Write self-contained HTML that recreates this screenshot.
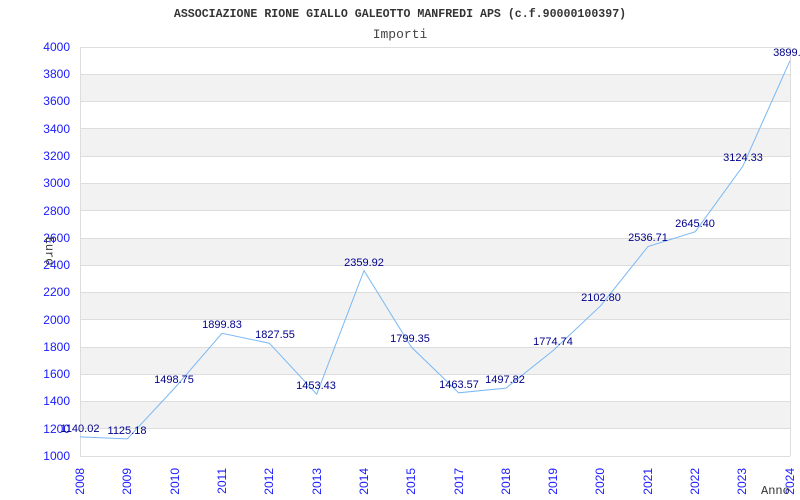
<!DOCTYPE html>
<html><head><meta charset="utf-8"><style>
html,body{margin:0;padding:0;background:#fff;width:800px;height:500px;overflow:hidden}
</style></head><body>
<svg width="800" height="500" xmlns="http://www.w3.org/2000/svg">
<text x="400" y="17" text-anchor="middle" font-family="Liberation Mono,monospace" font-weight="bold" font-size="11.6" fill="#333">ASSOCIAZIONE RIONE GIALLO GALEOTTO MANFREDI APS (c.f.90000100397)</text>
<text x="400" y="38" text-anchor="middle" font-family="Liberation Mono,monospace" font-size="13" fill="#444">Importi</text>
<g fill="#f2f2f2">
<rect x="80" y="74.3" width="710" height="27.3"/>
<rect x="80" y="128.8" width="710" height="27.3"/>
<rect x="80" y="183.3" width="710" height="27.3"/>
<rect x="80" y="237.9" width="710" height="27.3"/>
<rect x="80" y="292.4" width="710" height="27.3"/>
<rect x="80" y="347" width="710" height="27.3"/>
<rect x="80" y="401.5" width="710" height="27.3"/>
</g>
<g stroke="#ddd" stroke-width="1">
<line x1="80" y1="47.5" x2="790" y2="47.5"/><line x1="80" y1="74.5" x2="790" y2="74.5"/><line x1="80" y1="101.5" x2="790" y2="101.5"/><line x1="80" y1="128.5" x2="790" y2="128.5"/><line x1="80" y1="156.5" x2="790" y2="156.5"/><line x1="80" y1="183.5" x2="790" y2="183.5"/><line x1="80" y1="210.5" x2="790" y2="210.5"/><line x1="80" y1="238.5" x2="790" y2="238.5"/><line x1="80" y1="265.5" x2="790" y2="265.5"/><line x1="80" y1="292.5" x2="790" y2="292.5"/><line x1="80" y1="319.5" x2="790" y2="319.5"/><line x1="80" y1="347.5" x2="790" y2="347.5"/><line x1="80" y1="374.5" x2="790" y2="374.5"/><line x1="80" y1="401.5" x2="790" y2="401.5"/><line x1="80" y1="428.5" x2="790" y2="428.5"/><line x1="80" y1="456.5" x2="790" y2="456.5"/>
<line x1="80.5" y1="47" x2="80.5" y2="456"/><line x1="790.5" y1="47" x2="790.5" y2="456"/>
</g>
<g font-family="Liberation Sans,sans-serif" font-size="12" fill="#1a1aff" text-anchor="end">
<text x="70" y="51">4000</text><text x="70" y="78">3800</text><text x="70" y="105">3600</text><text x="70" y="133">3400</text><text x="70" y="160">3200</text><text x="70" y="187">3000</text><text x="70" y="215">2800</text><text x="70" y="242">2600</text><text x="70" y="269">2400</text><text x="70" y="296">2200</text><text x="70" y="324">2000</text><text x="70" y="351">1800</text><text x="70" y="378">1600</text><text x="70" y="405">1400</text><text x="70" y="433">1200</text><text x="70" y="460">1000</text>
</g>
<g font-family="Liberation Sans,sans-serif" font-size="12" fill="#1a1aff" text-anchor="end">
<text transform="translate(84,468) rotate(-90)">2008</text>
<text transform="translate(131,468) rotate(-90)">2009</text>
<text transform="translate(179,468) rotate(-90)">2010</text>
<text transform="translate(226,468) rotate(-90)">2011</text>
<text transform="translate(273,468) rotate(-90)">2012</text>
<text transform="translate(321,468) rotate(-90)">2013</text>
<text transform="translate(368,468) rotate(-90)">2014</text>
<text transform="translate(415,468) rotate(-90)">2015</text>
<text transform="translate(463,468) rotate(-90)">2017</text>
<text transform="translate(510,468) rotate(-90)">2018</text>
<text transform="translate(557,468) rotate(-90)">2019</text>
<text transform="translate(604,468) rotate(-90)">2020</text>
<text transform="translate(652,468) rotate(-90)">2021</text>
<text transform="translate(699,468) rotate(-90)">2022</text>
<text transform="translate(746,468) rotate(-90)">2023</text>
<text transform="translate(794,468) rotate(-90)">2024</text>
</g>
<text transform="translate(46,251) rotate(90)" text-anchor="middle" font-family="Liberation Mono,monospace" font-size="12" fill="#333">Euro</text>
<text x="761" y="494" font-family="Liberation Mono,monospace" font-size="12" fill="#333">Anno</text>
<polyline fill="none" stroke="#7ab8f5" stroke-width="1" points="80,436.9 127.3,438.9 174.7,388 222,333.3 269.3,343.2 316.7,394.2 364,270.6 411.3,347 458.7,392.8 506,388.1 553.3,350.4 600.7,305.7 648,246.5 695.3,231.7 742.7,166.4 790,60.7"/>
<g font-family="Liberation Sans,sans-serif" font-size="11" fill="#00008b" text-anchor="middle">
<text x="80" y="432">1140.02</text><text x="127" y="434">1125.18</text><text x="174" y="383">1498.75</text><text x="222" y="328">1899.83</text><text x="275" y="338">1827.55</text><text x="316" y="389">1453.43</text><text x="364" y="266">2359.92</text><text x="410" y="342">1799.35</text><text x="459" y="388">1463.57</text><text x="505" y="383">1497.82</text><text x="553" y="345">1774.74</text><text x="601" y="301">2102.80</text><text x="648" y="241">2536.71</text><text x="695" y="227">2645.40</text><text x="743" y="161">3124.33</text><text x="790" y="56">3899.1</text>
</g>
</svg>
</body></html>
